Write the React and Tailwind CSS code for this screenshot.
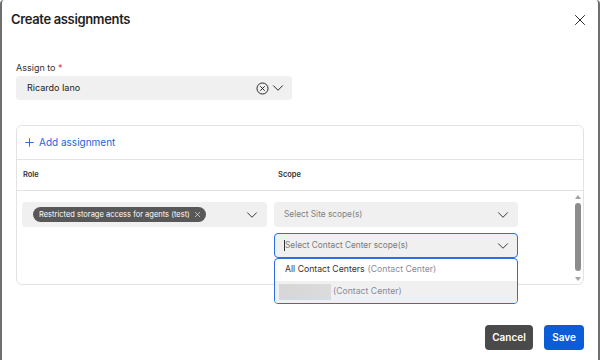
import { X, ChevronDown, Plus } from "lucide-react";

const font = { fontFamily: "Inter, 'Noto Sans', sans-serif" };

const CircleX = () => (
  <svg width="13" height="13" viewBox="0 0 16 16" fill="none" stroke="#222" strokeWidth="1.2">
    <circle cx="8" cy="8" r="6.8" />
    <path d="M5.6 5.6l4.8 4.8M10.4 5.6l-4.8 4.8" strokeLinecap="round" />
  </svg>
);

const Scrollbar = () => (
  <div className="w-[8px] mr-[1px] flex flex-col items-center pt-[3px] pb-[2px]">
    <svg width="8" height="6" viewBox="0 0 8 6">
      <path d="M4 1L7 5H1z" fill="#a3a3a3" />
    </svg>
    <div className="w-[6px] h-[68px] mt-[3px] rounded-full bg-[#8c8c8c]" />
    <div className="flex-1" />
    <svg width="8" height="6" viewBox="0 0 8 6">
      <path d="M4 5L7 1H1z" fill="#a3a3a3" />
    </svg>
  </div>
);

const App = () => {
  return (
    <div
      className="w-[600px] h-[360px] bg-white border-l-2 border-r-2 border-[#6e6e6e] rounded-t-[4px] flex flex-col text-[#1f1f1f]"
      style={font}
    >
      <div className="flex items-center justify-between pl-[9px] pr-[9px] pt-[9px] h-[30px]">
        <h1 className="text-[13px] font-semibold tracking-[-0.35px]">Create assignments</h1>
        <X size={18} strokeWidth={1.3} className="text-[#222]" />
      </div>

      <div className="px-[14px] pt-[32px] flex flex-col">
        <label className="text-[9px] text-[#333] leading-[12px]">
          Assign to <span className="text-[#d93030]">*</span>
        </label>
        <div className="mt-[2px] w-[276px] h-[24px] bg-[#f0f0f0] rounded-[4px] flex items-center pl-[11px] pr-[5px]">
          <span className="text-[9px] text-[#222] flex-1">Ricardo Iano</span>
          <CircleX />
          <ChevronDown size={18} strokeWidth={1.3} className="text-[#222]" />
        </div>

        <div className="mt-[25px] w-[568px] h-[160px] border border-[#e3e3e3] rounded-[6px] flex flex-col">
          <div className="h-[34px] flex items-center pl-[6px] border-b border-[#e3e3e3] text-[#1d64d8]">
            <Plus size={13} strokeWidth={1.7} />
            <span className="ml-[3px] text-[10px]">Add assignment</span>
          </div>
          <div className="h-[31px] flex items-center border-b border-[#e3e3e3] text-[7.5px] font-semibold text-[#333]">
            <span className="ml-[6px] w-[255px]">Role</span>
            <span>Scope</span>
          </div>
          <div className="flex-1 flex">
            <div className="flex-1 flex pt-[11px] pl-[5px] gap-[7px]">
              <div className="w-[245px] h-[25px] bg-[#f0f0f0] rounded-[4px] flex items-center pl-[11px] pr-[6px]">
                <div className="h-[15px] bg-[#585858] rounded-full flex items-center pl-[6px] pr-[4px] text-white text-[7.5px]">
                  Restricted storage access for agents (test)
                  <X size={9} strokeWidth={1.6} className="ml-[3px]" />
                </div>
                <div className="flex-1" />
                <ChevronDown size={18} strokeWidth={1.3} className="text-[#333]" />
              </div>
              <div className="w-[244px] flex flex-col gap-[6px]">
                <div className="h-[25px] bg-[#f0f0f0] rounded-[4px] flex items-center pl-[10px] pr-[6px]">
                  <span className="flex-1 text-[8.3px] text-[#808080]">Select Site scope(s)</span>
                  <ChevronDown size={18} strokeWidth={1.3} className="text-[#333]" />
                </div>
                <div className="relative">
                  <div className="h-[25px] bg-[#f0f0f0] rounded-[4px] border-[1.5px] border-[#2a6ee0] flex items-center pl-[9px] pr-[5px]">
                    <span className="w-[1px] h-[11px] bg-[#333]" />
                    <span className="flex-1 text-[8.3px] text-[#7a7a7a]">Select Contact Center scope(s)</span>
                    <ChevronDown size={18} strokeWidth={1.3} className="text-[#333]" />
                  </div>
                  <div className="absolute left-0 right-0 top-[25px] bg-white border-[1.5px] border-[#2a6ee0] rounded-[4px] flex flex-col z-10 overflow-hidden">
                    <div className="h-[22px] flex items-center pl-[10px] text-[8.7px] text-[#333]">
                      All Contact Centers<span className="ml-[3px] text-[#8a8a9a]">(Contact Center)</span>
                    </div>
                    <div className="h-[22px] bg-[#f0f0f0] flex items-center pl-[4px] text-[8.7px]">
                      <span className="w-[52px] h-[16px] bg-gradient-to-r from-[#d6d6d6] to-[#dcdcdc]" />
                      <span className="ml-[2px] text-[#8a8a9a]">(Contact Center)</span>
                    </div>
                  </div>
                </div>
              </div>
            </div>
            <Scrollbar />
          </div>
        </div>
      </div>

      <div className="flex-1" />
      <div className="flex justify-end gap-[11px] pr-[14px] pb-[10px]">
        <button className="h-[25px] w-[48px] rounded-[4px] bg-[#4a4a4a] text-white text-[10px] font-semibold">
          Cancel
        </button>
        <button className="h-[25px] w-[40px] rounded-[4px] bg-[#0b5cd7] text-white text-[10px] font-semibold">
          Save
        </button>
      </div>
    </div>
  );
};

export default App;
